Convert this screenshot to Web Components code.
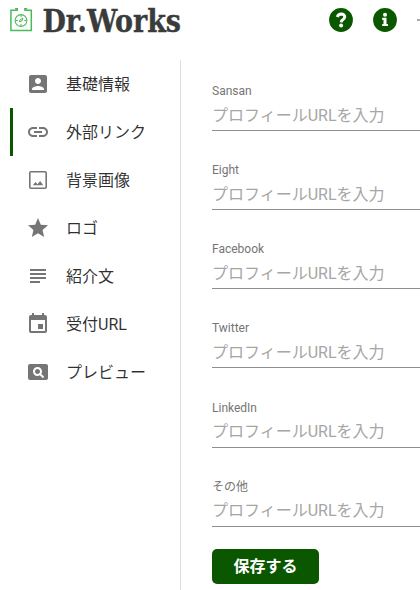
<!DOCTYPE html>
<html lang="ja">
<head>
<meta charset="utf-8">
<title>Dr.Works</title>
<style>
    body {
        margin: 0;
        background: #fff;
        font-family: Roboto, "Noto Sans CJK JP", sans-serif;
        font-size: 16px;
        color: rgba(0, 0, 0, 0.82);
        overflow: hidden;
    }
</style>
</head>
<body>
<profile-page>
    <app-header slot="header"></app-header>
    <side-menu slot="menu">
        <menu-item icon="account">基礎情報</menu-item>
        <menu-item icon="link" active>外部リンク</menu-item>
        <menu-item icon="image">背景画像</menu-item>
        <menu-item icon="star">ロゴ</menu-item>
        <menu-item icon="subject">紹介文</menu-item>
        <menu-item icon="event">受付URL</menu-item>
        <menu-item icon="preview">プレビュー</menu-item>
    </side-menu>
    <link-form>
        <url-field label="Sansan"></url-field>
        <url-field label="Eight"></url-field>
        <url-field label="Facebook"></url-field>
        <url-field label="Twitter"></url-field>
        <url-field label="LinkedIn"></url-field>
        <url-field label="その他"></url-field>
        <save-button slot="action">保存する</save-button>
    </link-form>
</profile-page>

<script>
const ICONS = {
    account: 'M3 5v14c0 1.1.89 2 2 2h14c1.1 0 2-.9 2-2V5c0-1.1-.9-2-2-2H5c-1.11 0-2 .9-2 2zm12 4c0 1.66-1.34 3-3 3s-3-1.34-3-3 1.34-3 3-3 3 1.34 3 3zm-9 8c0-2 4-3.1 6-3.1s6 1.1 6 3.1v1H6v-1z',
    link: 'M3.9 12c0-1.71 1.39-3.1 3.1-3.1h4V7H7c-2.76 0-5 2.24-5 5s2.24 5 5 5h4v-1.9H7c-1.71 0-3.1-1.39-3.1-3.1zM8 13h8v-2H8v2zm9-6h-4v1.9h4c1.71 0 3.1 1.39 3.1 3.1s-1.39 3.1-3.1 3.1h-4V17h4c2.76 0 5-2.24 5-5s-2.24-5-5-5z',
    image: 'M19 4.6c.22 0 .4.18.4.4v14c0 .22-.18.4-.4.4H5c-.22 0-.4-.18-.4-.4V5c0-.22.18-.4.4-.4h14M19 3H5c-1.1 0-2 .9-2 2v14c0 1.1.9 2 2 2h14c1.1 0 2-.9 2-2V5c0-1.1-.9-2-2-2zM14.1 12.9l-2.6 3.4-1.9-2.2L6.8 17.2h10.5z',
    star: 'M12 17.27L18.18 21l-1.64-7.03L22 9.24l-7.19-.61L12 2 9.19 8.63 2 9.24l5.46 4.73L5.82 21z',
    subject: 'M14 17H4v2h10v-2zm6-8H4v2h16V9zM4 15h16v-2H4v2zM4 5v2h16V5H4z',
    event: 'M17 12h-5v5h5v-5zM16 1v2H8V1H6v2H5c-1.11 0-1.99.9-1.99 2L3 19c0 1.1.89 2 2 2h14c1.1 0 2-.9 2-2V5c0-1.1-.9-2-2-2h-1V1h-2zm3 18H5V8h14v11z',
    preview: 'M11.5 9C10.12 9 9 10.12 9 11.5s1.12 2.5 2.5 2.5 2.5-1.12 2.5-2.5S12.88 9 11.5 9zM20 4H4c-1.1 0-2 .9-2 2v12c0 1.1.9 2 2 2h16c1.1 0 2-.9 2-2V6c0-1.1-.9-2-2-2zm-3.21 14.21l-2.91-2.91c-.69.44-1.51.7-2.39.7C9.01 16 7 13.99 7 11.5S9.01 7 11.5 7 16 9.01 16 11.5c0 .88-.26 1.69-.7 2.39l2.91 2.9-1.42 1.42z'
};

class ProfilePage extends HTMLElement {
    constructor() {
        super();
        this.attachShadow({ mode: 'open' });
    }

    connectedCallback() {
        this.shadowRoot.innerHTML = `
            <style>
                :host {
                    display: grid;
                    grid-template-rows: 60px 530px;
                    height: 590px;
                }
                .content {
                    display: grid;
                    grid-template-columns: 171px 1fr;
                    padding-left: 10px;
                }
            </style>
            <slot name="header"></slot>
            <div class="content">
                <slot name="menu"></slot>
                <slot></slot>
            </div>
        `;
    }
}

class AppHeader extends HTMLElement {
    constructor() {
        super();
        this.attachShadow({ mode: 'open' });
    }

    connectedCallback() {
        this.shadowRoot.innerHTML = `
            <style>
                :host {
                    display: flex;
                    align-items: flex-start;
                    justify-content: space-between;
                    padding-left: 10px;
                }
                svg {
                    display: block;
                    overflow: visible;
                }
                .actions {
                    display: flex;
                    gap: 20px;
                    padding-top: 8px;
                }
                .more {
                    width: 3px;
                    height: 2px;
                    margin-top: 11px;
                    background: #aaa;
                }
            </style>
            <svg width="190" height="48" viewBox="0 0 190 48">
                <g fill="none" stroke="#4cba5a">
                    <path stroke-width="1.5" d="M7.2 8v2.3H.9v20.3h20.4V10.3H15V8"/>
                    <path stroke-width="1.5" d="M5 8.7h3M14.2 8.7h3"/>
                    <circle cx="11" cy="20.5" r="5.9" stroke-width="1.1"/>
                    <path stroke-width="1" d="M11 15v2.2M11 24v2M5.5 20.5h2.2M14.3 20.5h2.2M9.5 22l.6-2.2 2.9-1.8-1.2 3z"/>
                </g>
                <text x="32.5" y="31.5" textLength="138.5" lengthAdjust="spacingAndGlyphs" font-family="DejaVu Serif, serif" font-size="32" font-weight="700" fill="#393c3b" stroke="#393c3b" stroke-width=".4">Dr.Works</text>
            </svg>
            <div class="actions">
                <svg width="24" height="24" viewBox="0 0 24 24">
                    <circle cx="12" cy="12" r="11.9" fill="#0a5700"/>
                    <path d="M8.2 9Q9.4 6 12.2 6Q15.8 6.1 15.7 9Q15.6 10.6 13.8 11.7Q12.3 12.5 12.2 14.3" fill="none" stroke="#fff" stroke-width="3"/>
                    <circle cx="12.1" cy="17.5" r="2" fill="#fff"/>
                </svg>
                <svg width="24" height="24" viewBox="0 0 24 24">
                    <circle cx="12" cy="12" r="11.9" fill="#0a5700"/>
                    <circle cx="12" cy="6.7" r="2" fill="#fff"/>
                    <path d="M9.2 9.8h4.3v6.1h1.4V18H9.2v-2.100h1.300V12H9.200z" fill="#fff"/>
                </svg>
                <span class="more"></span>
            </div>
        `;
    }
}

class SideMenu extends HTMLElement {
    constructor() {
        super();
        this.attachShadow({ mode: 'open' });
    }

    connectedCallback() {
        this.shadowRoot.innerHTML = `
            <style>
                :host {
                    display: flex;
                    flex-direction: column;
                    border-right: 1px solid #dedede;
                }
            </style>
            <slot></slot>
        `;
    }
}

class MenuItem extends HTMLElement {
    constructor() {
        super();
        this.attachShadow({ mode: 'open' });
    }

    connectedCallback() {
        const icon = ICONS[this.getAttribute('icon')] || '';

        this.shadowRoot.innerHTML = `
            <style>
                :host {
                    display: flex;
                    align-items: center;
                    gap: 16px;
                    box-sizing: border-box;
                    height: 48px;
                    padding-left: 13px;
                    border-left: 3px solid transparent;
                    line-height: 24px;
                    white-space: nowrap;
                }
                :host([active]) {
                    border-left-color: #0a5700;
                }
                svg {
                    fill: #757575;
                }
                span {
                    padding-top: 1px;
                }
            </style>
            <svg width="24" height="24" viewBox="0 0 24 24"><path fill-rule="evenodd" d="${icon}"/></svg>
            <span><slot></slot></span>
        `;
    }
}

class LinkForm extends HTMLElement {
    constructor() {
        super();
        this.attachShadow({ mode: 'open' });
    }

    connectedCallback() {
        this.shadowRoot.innerHTML = `
            <style>
                :host {
                    display: block;
                    padding: 22px 0 0 31px;
                }
                .fields {
                    display: flex;
                    flex-direction: column;
                    gap: 30.15px;
                    margin-bottom: 22px;
                }
            </style>
            <div class="fields"><slot></slot></div>
            <slot name="action"></slot>
        `;
    }
}

class UrlField extends HTMLElement {
    constructor() {
        super();
        this.attachShadow({ mode: 'open' });
    }

    connectedCallback() {
        const label = this.getAttribute('label') || '';

        this.shadowRoot.innerHTML = `
            <style>
                :host {
                    display: block;
                    height: 49px;
                }
                label {
                    display: block;
                    height: 18px;
                    font-size: 12px;
                    line-height: 18px;
                    color: #757575;
                }
                input {
                    display: block;
                    box-sizing: border-box;
                    width: 100%;
                    height: 31px;
                    padding: 0;
                    border: 0;
                    border-bottom: 1px solid #8e8e8e;
                    border-radius: 0;
                    outline: 0;
                    background: none;
                    font: inherit;
                    color: inherit;
                }
                input::placeholder {
                    color: #a6a6a6;
                }
            </style>
            <label for="url">${label}</label>
            <input id="url" type="text" placeholder="プロフィールURLを入力">
        `;
    }
}

class SaveButton extends HTMLElement {
    constructor() {
        super();
        this.attachShadow({ mode: 'open' });
    }

    connectedCallback() {
        this.shadowRoot.innerHTML = `
            <style>
                :host {
                    display: block;
                }
                button {
                    display: block;
                    width: 107px;
                    height: 35px;
                    padding: 0;
                    border: 0;
                    border-radius: 5px;
                    background: #0a5700;
                    color: #fff;
                    font: inherit;
                    font-weight: 700;
                    line-height: 35px;
                }
            </style>
            <button type="button"><slot></slot></button>
        `;
    }
}

customElements.define('profile-page', ProfilePage);
customElements.define('app-header', AppHeader);
customElements.define('side-menu', SideMenu);
customElements.define('menu-item', MenuItem);
customElements.define('link-form', LinkForm);
customElements.define('url-field', UrlField);
customElements.define('save-button', SaveButton);
</script>
</body>
</html>
